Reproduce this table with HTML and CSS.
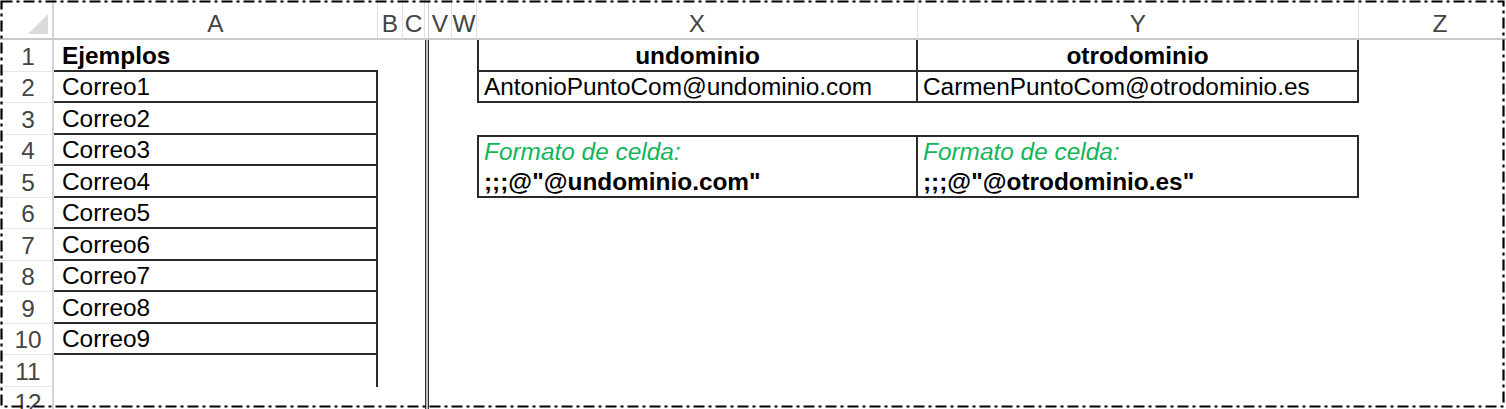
FILE: index.html
```html
<!DOCTYPE html>
<html lang="es">
<head>
<meta charset="utf-8">
<title>Hoja</title>
<link rel="stylesheet" href="styles.css">
</head>
<body>
<div class="sheet">
  <div class="row hdr">
    <div class="corner"><span class="tri"></span></div>
    <div class="ch">A</div>
    <div class="ch">B</div>
    <div class="ch">C</div>
    <div class="ch fzh"></div>
    <div class="ch">V</div>
    <div class="ch">W</div>
    <div class="ch">X</div>
    <div class="ch">Y</div>
    <div class="ch last">Z</div>
  </div>

  <div class="row">
    <div class="rh">1</div>
    <div class="c b-b"><b>Ejemplos</b></div>
    <div class="c"></div><div class="c"></div>
    <div class="fz"></div>
    <div class="c"></div><div class="c"></div>
    <div class="c center b-l b-r b-b"><b>undominio</b></div>
    <div class="c center b-r b-b"><b>otrodominio</b></div>
    <div class="c"></div>
  </div>

  <div class="row">
    <div class="rh">2</div>
    <div class="c b-r b-b">Correo1</div>
    <div class="c"></div><div class="c"></div>
    <div class="fz"></div>
    <div class="c"></div><div class="c"></div>
    <div class="c b-l b-r b-b pad-s">AntonioPuntoCom@undominio.com</div>
    <div class="c b-r b-b pad-s">CarmenPuntoCom@otrodominio.es</div>
    <div class="c"></div>
  </div>

  <div class="row">
    <div class="rh">3</div>
    <div class="c b-r b-b">Correo2</div>
    <div class="c"></div><div class="c"></div>
    <div class="fz"></div>
    <div class="c"></div><div class="c"></div>
    <div class="c"></div><div class="c"></div><div class="c"></div>
  </div>

  <div class="row">
    <div class="rh">4</div>
    <div class="c b-r b-b">Correo3</div>
    <div class="c"></div><div class="c"></div>
    <div class="fz"></div>
    <div class="c"></div><div class="c"></div>
    <div class="c b-t b-l b-r pad-s note">Formato de celda:</div>
    <div class="c b-t b-r pad-s note">Formato de celda:</div>
    <div class="c"></div>
  </div>

  <div class="row">
    <div class="rh">5</div>
    <div class="c b-r b-b">Correo4</div>
    <div class="c"></div><div class="c"></div>
    <div class="fz"></div>
    <div class="c"></div><div class="c"></div>
    <div class="c b-l b-r b-b pad-s"><b>;;;@"@undominio.com"</b></div>
    <div class="c b-r b-b pad-s"><b>;;;@"@otrodominio.es"</b></div>
    <div class="c"></div>
  </div>

  <div class="row">
    <div class="rh">6</div>
    <div class="c b-r b-b">Correo5</div>
    <div class="c"></div><div class="c"></div>
    <div class="fz"></div>
    <div class="c"></div><div class="c"></div>
    <div class="c"></div><div class="c"></div><div class="c"></div>
  </div>

  <div class="row">
    <div class="rh">7</div>
    <div class="c b-r b-b">Correo6</div>
    <div class="c"></div><div class="c"></div>
    <div class="fz"></div>
    <div class="c"></div><div class="c"></div>
    <div class="c"></div><div class="c"></div><div class="c"></div>
  </div>

  <div class="row">
    <div class="rh">8</div>
    <div class="c b-r b-b">Correo7</div>
    <div class="c"></div><div class="c"></div>
    <div class="fz"></div>
    <div class="c"></div><div class="c"></div>
    <div class="c"></div><div class="c"></div><div class="c"></div>
  </div>

  <div class="row">
    <div class="rh">9</div>
    <div class="c b-r b-b">Correo8</div>
    <div class="c"></div><div class="c"></div>
    <div class="fz"></div>
    <div class="c"></div><div class="c"></div>
    <div class="c"></div><div class="c"></div><div class="c"></div>
  </div>

  <div class="row">
    <div class="rh">10</div>
    <div class="c b-r b-b">Correo9</div>
    <div class="c"></div><div class="c"></div>
    <div class="fz"></div>
    <div class="c"></div><div class="c"></div>
    <div class="c"></div><div class="c"></div><div class="c"></div>
  </div>

  <div class="row">
    <div class="rh">11</div>
    <div class="c b-r"></div>
    <div class="c"></div><div class="c"></div>
    <div class="fz"></div>
    <div class="c"></div><div class="c"></div>
    <div class="c"></div><div class="c"></div><div class="c"></div>
  </div>

  <div class="row">
    <div class="rh">12</div>
    <div class="c"></div>
    <div class="c"></div><div class="c"></div>
    <div class="fz"></div>
    <div class="c"></div><div class="c"></div>
    <div class="c"></div><div class="c"></div><div class="c"></div>
  </div>
</div>

<svg class="frame" width="1506" height="409" viewBox="0 0 1506 409" aria-hidden="true">
  <rect x="1.5" y="1.5" width="1502" height="405" fill="none" stroke="#000" stroke-width="2.2" stroke-dasharray="11 4 3 4"/>
</svg>
</body>
</html>
```

FILE: styles.css
```css
html, body {
  margin: 0;
  padding: 0;
  background: #fff;
}

body {
  width: 1506px;
  height: 409px;
  overflow: hidden;
  position: relative;
  font-family: "Liberation Sans", Arial, sans-serif;
  font-size: 24.4px;
  color: #000;
}

.sheet {
  --cols: 54px 324px 25px 22px 4px 23px 25px 441px 441px 162px;
  display: flex;
  flex-direction: column;
  width: 1521px;
}

.row {
  display: grid;
  grid-template-columns: var(--cols);
  height: 31.5px;
}

.row.hdr {
  height: 40px;
}

.ch {
  box-sizing: border-box;
  display: flex;
  align-items: center;
  justify-content: center;
  padding-top: 9px;
  color: #444;
  border-right: 1px solid #e1e1e1;
  border-bottom: 2px solid #c9c9c9;
  line-height: 28px;
}

.ch.fzh {
  border-right: 1px solid #d0d0d0;
}

.ch.last {
  border-right: none;
}

.corner {
  box-sizing: border-box;
  position: relative;
  border-right: 2px solid #d4d4d4;
  border-bottom: 2px solid #c9c9c9;
}

.tri {
  position: absolute;
  right: 4px;
  bottom: 4px;
  width: 0;
  height: 0;
  border-left: 20px solid transparent;
  border-bottom: 20px solid #dadada;
}

.rh {
  box-sizing: border-box;
  display: flex;
  align-items: flex-end;
  justify-content: center;
  padding-left: 4px;
  padding-bottom: 0;
  color: #444;
  line-height: 28px;
  border-right: 2px solid #d4d4d4;
  border-bottom: 1px solid #e6e6e6;
}

.c {
  box-sizing: border-box;
  display: flex;
  align-items: flex-end;
  padding: 0 0 0 8px;
  line-height: 28px;
  white-space: nowrap;
  overflow: visible;
  min-width: 0;
}

.c.pad-s {
  padding-left: 5px;
}

.c.center {
  justify-content: center;
  padding-left: 0;
}

.fz {
  box-sizing: border-box;
  border-left: 1px solid #333;
  border-right: 1px solid #333;
  background: #bdbdbd;
}

.b-t { border-top: 2px solid #2a2a2a; }
.b-b { border-bottom: 2px solid #2a2a2a; }
.b-l { border-left: 2px solid #2a2a2a; }
.b-r { border-right: 2px solid #2a2a2a; }

.note {
  color: #12b55a;
  font-style: italic;
}

.frame {
  position: absolute;
  left: 0;
  top: 0;
  pointer-events: none;
}
```
